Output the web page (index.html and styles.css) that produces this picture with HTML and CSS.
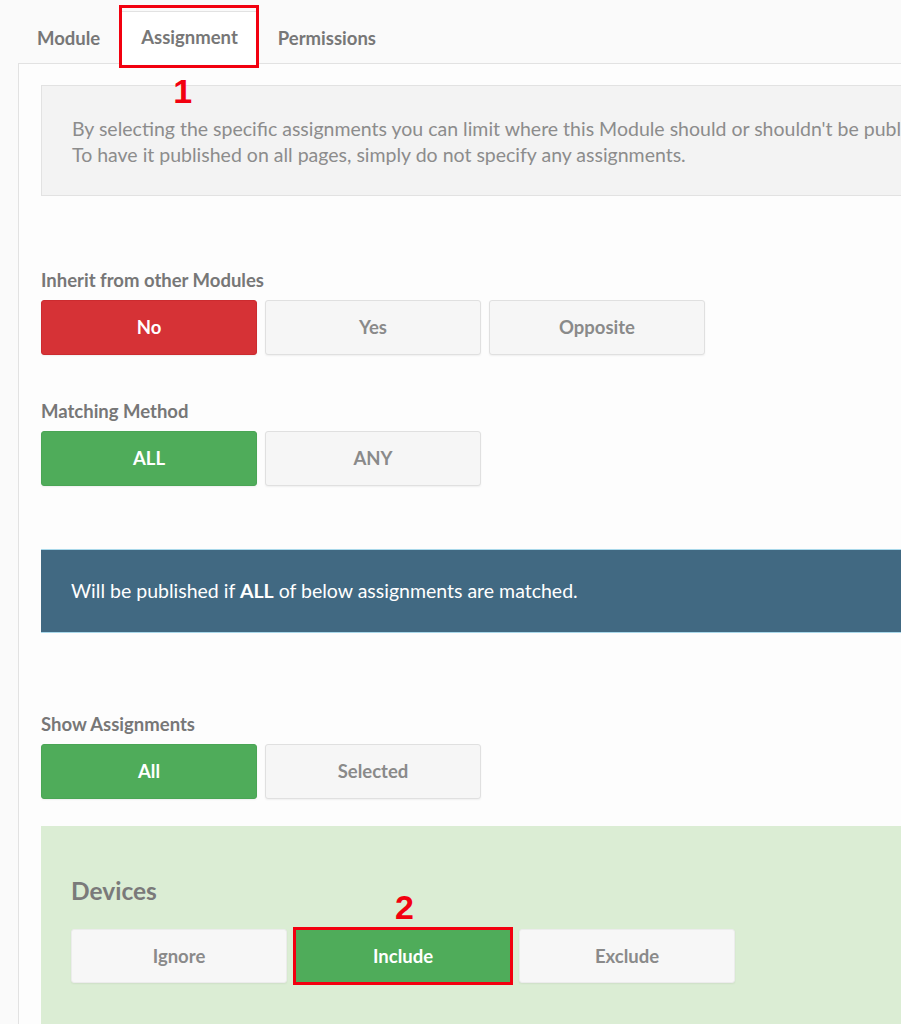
FILE: index.html
```html
<!DOCTYPE html>
<html>
<head>
<meta charset="utf-8">
<link rel="stylesheet" href="styles.css">
</head>
<body>
<div class="page">
  <nav class="tabs">
    <div class="tab">Module</div>
    <div class="tab active">Assignment<span class="mark-box"></span><span class="mark-num one">1</span></div>
    <div class="tab">Permissions</div>
  </nav>
  <div class="panel">
    <div class="info">By selecting the specific assignments you can limit where this Module should or shouldn't be published.<br>To have it published on all pages, simply do not specify any assignments.</div>

    <div class="field first">
      <div class="label">Inherit from other Modules</div>
      <div class="btns">
        <div class="btn red">No</div>
        <div class="btn">Yes</div>
        <div class="btn">Opposite</div>
      </div>
    </div>

    <div class="field">
      <div class="label">Matching Method</div>
      <div class="btns">
        <div class="btn green">ALL</div>
        <div class="btn">ANY</div>
      </div>
    </div>

    <div class="notice">Will be published if <b>ALL</b> of below assignments are matched.</div>

    <div class="field show">
      <div class="label">Show Assignments</div>
      <div class="btns">
        <div class="btn green">All</div>
        <div class="btn">Selected</div>
      </div>
    </div>

    <div class="group">
      <h2 class="group-title">Devices</h2>
      <div class="btns">
        <div class="btn">Ignore</div>
        <div class="btn green marked">Include<span class="mark-num two">2</span></div>
        <div class="btn">Exclude</div>
      </div>
    </div>
  </div>
</div>
</body>
</html>
```
FILE: styles.css
```css
html, body {
  margin: 0;
  overflow: hidden;
}
body {
  background: #fafafa;
  font-family: Lato, "Liberation Sans", sans-serif;
  color: #888;
}
.page {
  width: 1150px;
}
.tabs {
  display: flex;
  align-items: flex-end;
  height: 63px;
  padding-left: 18px;
}
.tab {
  position: relative;
  height: 50px;
  line-height: 50px;
  padding: 0 19px;
  font-size: 18.5px;
  font-weight: 700;
  color: #777;
}
.tab.active {
  background: #fff;
  border: 1px solid #e2e2e2;
  border-bottom-color: #fff;
  margin-bottom: -1px;
  height: 51px;
  line-height: 50px;
  padding: 0 20px 0 21px;
}
.mark-box {
  position: absolute;
  left: -1px;
  right: -1px;
  top: -7px;
  bottom: -5px;
  border: 3px solid #f2000f;
}
.mark-num {
  position: absolute;
  font-family: "Liberation Sans", Arial, sans-serif;
  font-weight: 700;
  font-size: 34px;
  line-height: 34px;
  color: #f2000f;
}
.mark-num.one {
  left: 53px;
  top: 62px;
}
.panel {
  margin-left: 18px;
  border: 1px solid #e2e2e2;
  background: #fdfdfd;
  padding: 21px 0 60px 22px;
}
.info {
  background: #f3f3f3;
  border: 1px solid #e2e2e2;
  padding: 30px 30px 27px;
  font-size: 19.5px;
  line-height: 26px;
  color: #8c8c8c;
  white-space: nowrap;
}
.field {
  margin-top: 46px;
}
.field.first {
  margin-top: 74px;
}
.field.show {
  margin-top: 81px;
}
.label {
  font-size: 18.5px;
  font-weight: 700;
  line-height: 20px;
  color: #777;
  margin-bottom: 10px;
}
.btns {
  display: flex;
  gap: 8px;
}
.btn {
  position: relative;
  box-sizing: border-box;
  width: 216px;
  height: 55px;
  line-height: 53px;
  text-align: center;
  font-size: 18.5px;
  font-weight: 700;
  color: #8a8a8a;
  background: #f6f6f6;
  border: 1px solid #e0e0e0;
  border-radius: 3px;
  box-shadow: 0 1px 2px rgba(0, 0, 0, 0.06);
}
.btn.red {
  background: #d63236;
  border-color: #cc2b2f;
  color: #fff;
}
.btn.green {
  background: #4fac5a;
  border-color: #4aa555;
  color: #fff;
}
.notice {
  margin-top: 63px;
  height: 84px;
  box-sizing: border-box;
  background: #416982;
  border-top: 1px solid #a9d8ea;
  border-bottom: 1px solid #a9d8ea;
  padding-left: 30px;
  line-height: 82px;
  font-size: 19.5px;
  color: #fff;
}
.notice b {
  font-weight: 700;
}
.group {
  margin-top: 27px;
  background: #dbedd4;
  padding: 50px 30px 60px;
}
.group-title {
  margin: 0 0 23px;
  font-size: 24.5px;
  line-height: 30px;
  font-weight: 700;
  color: #7a7a7a;
}
.group .btns {
  gap: 8px;
}
.group .btn {
  height: 54px;
  line-height: 52px;
  background: #f7f7f7;
  border-color: #ececec;
}
.group .btn.green {
  background: #4fac5a;
  border-color: #4fac5a;
  outline: 3px solid #f2000f;
  outline-offset: -1px;
  border-radius: 0;
}
.mark-num.two {
  left: 99px;
  top: -40px;
}
```
